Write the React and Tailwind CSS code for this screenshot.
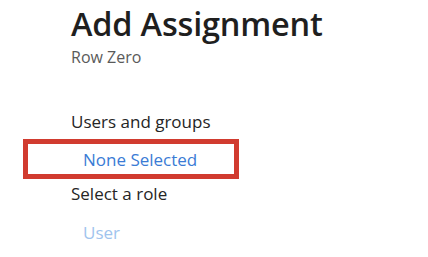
import React from "react";

export default function App() {
    return (
        <div
            className="w-[428px] h-[257px] bg-white overflow-hidden"
            style={{ fontFamily: '"Open Sans", "Noto Sans", sans-serif' }}
        >
            <div className="pl-[71px] pt-[2px]">
                <h1 className="text-[32.5px] leading-[44px] font-semibold text-[#1f1f1f] tracking-[-0.2px]">Add Assignment</h1>
                <p className="text-[16px] leading-[20px] text-[#5a5a5a] mt-[1px]">Row Zero</p>
            </div>

            <div className="mt-[44px]">
                <p className="pl-[71px] text-[17px] leading-[22px] text-[#252525]">Users and groups</p>

                {/* selected users box */}
                <div className="ml-[23px] mt-[6px] w-[216px] h-[40px] border-[5px] border-[#d13b2f] flex items-center">
                    <span className="pl-[55px] pt-[2px] text-[17px] leading-[22px] text-[#3a7bd5]">None Selected</span>
                </div>

                <p className="pl-[71px] mt-[4px] text-[17px] leading-[22px] text-[#252525]">Select a role</p>
                <p className="pl-[83px] mt-[17px] text-[17px] leading-[22px] text-[#9fc4ee]">User</p>
            </div>
        </div>
    );
}
